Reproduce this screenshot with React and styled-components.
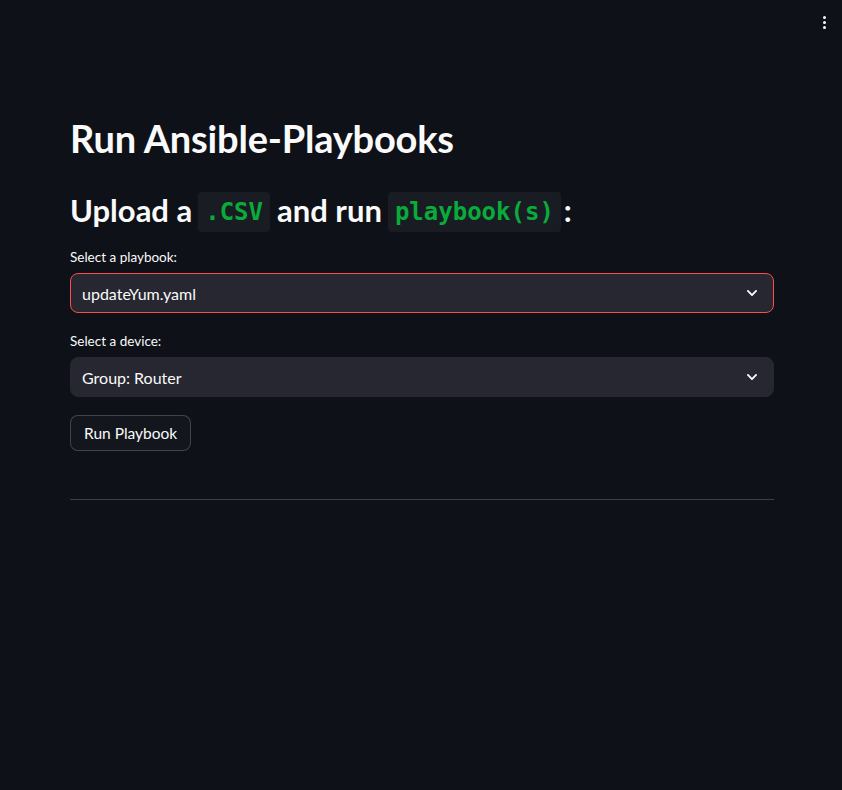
import React from "react";
import styled, { createGlobalStyle } from "styled-components";

const Global = createGlobalStyle`
  html, body { margin: 0; padding: 0; background: #0e1117; }
  body { font-family: "Lato", "Noto Sans", sans-serif; color: #fafafa; }
  * { box-sizing: border-box; }
`;

const Page = styled.div`
  min-height: 790px;
  background: #0e1117;
`;

const Header = styled.header`
  height: 44px;
  display: flex;
  justify-content: flex-end;
  align-items: center;
  padding-right: 14px;
`;

const Kebab = styled.button`
  background: none;
  border: none;
  padding: 0;
  width: 8px;
  display: flex;
  flex-direction: column;
  align-items: center;
  gap: 2px;
  cursor: pointer;
  span {
    width: 3px;
    height: 3px;
    border-radius: 50%;
    background: #fafafa;
  }
`;

const Main = styled.main`
  max-width: 736px;
  margin: 0 auto;
  padding: 68px 15px 0 17px;
  display: flex;
  flex-direction: column;
`;

const Title = styled.h1`
  margin: 0;
  font-size: 38px;
  font-weight: 700;
  line-height: 52px;
  letter-spacing: -0.2px;
`;

const Subtitle = styled.h2`
  margin: 24px 0 0 0;
  font-size: 31px;
  font-weight: 700;
  line-height: 44px;
  display: flex;
  align-items: center;
`;

const Code = styled.code`
  font-family: "DejaVu Sans Mono", "Liberation Mono", monospace;
  font-size: 24px;
  font-weight: 700;
  color: #09ab3b;
  background: #1a1c24;
  border-radius: 4px;
  padding: 0 7px;
  height: 40px;
  line-height: 40px;
  margin: 4px ${(p) => (p.$last ? 3 : 7)}px 0 6px;
`;

const Field = styled.div`
  display: flex;
  flex-direction: column;
  margin-top: ${(p) => p.$mt}px;
`;

const Label = styled.label`
  font-size: 13.5px;
  line-height: 16px;
  margin-bottom: 8px;
`;

const Select = styled.div`
  height: 40px;
  border-radius: 8px;
  background: #262730;
  border: 1px solid ${(p) => (p.$focused ? "#ff4b4b" : "#262730")};
  display: flex;
  align-items: center;
  justify-content: space-between;
  padding: 0 14px 0 11px;
  font-size: 16px;
  color: #fafafa;
`;

const Button = styled.button`
  align-self: flex-start;
  margin-top: 18px;
  height: 36px;
  padding: 0 13px;
  border-radius: 8px;
  border: 1px solid rgba(250, 250, 250, 0.2);
  background: #13161d;
  color: #fafafa;
  font-family: inherit;
  font-size: 15.5px;
`;

const Divider = styled.hr`
  margin: 48px 0 0 0;
  border: none;
  border-top: 1px solid rgba(250, 250, 250, 0.2);
  height: 0;
`;

const Chevron = () => (
  <svg width="14" height="14" viewBox="0 0 24 24" fill="none">
    <path d="M5 8.5l7 7 7-7" stroke="#fafafa" strokeWidth="3.2" strokeLinecap="round" strokeLinejoin="round" />
  </svg>
);

export default function App() {
  return (
    <Page>
      <Global />
      <Header>
        <Kebab aria-label="menu">
          <span />
          <span />
          <span />
        </Kebab>
      </Header>
      <Main>
        <Title>Run Ansible-Playbooks</Title>
        <Subtitle>
          Upload a<Code>.CSV</Code>and run<Code $last>playbook(s)</Code>:
        </Subtitle>
        <Field $mt={17}>
          <Label>Select a playbook:</Label>
          <Select $focused>
            <span>updateYum.yaml</span>
            <Chevron />
          </Select>
        </Field>
        <Field $mt={20}>
          <Label>Select a device:</Label>
          <Select>
            <span>Group: Router</span>
            <Chevron />
          </Select>
        </Field>
        <Button>Run Playbook</Button>
        <Divider />
      </Main>
    </Page>
  );
}
